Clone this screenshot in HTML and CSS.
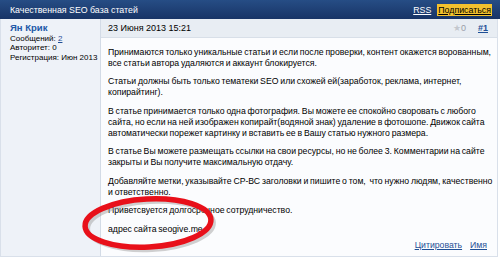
FILE: index.html
```html
<!DOCTYPE html>
<html lang="ru">
  <head>
    <meta charset="utf-8">
    <meta name="viewport" content="width=device-width, initial-scale=1">
    <title>Качественная SEO база статей</title>
    <link rel="stylesheet" href="styles.css">
  </head>
  <body>
  <div id="thread">
    <div class="head">
      <span class="title">Качественная SEO база статей</span>
      <span class="head-links"><a href="#" class="rss">RSS</a><a href="#" class="subscribe">Подписаться</a></span>
    </div>
    <div class="post">
      <div class="author">
        <a href="#" class="name">Ян Крик</a>
        <div>Сообщений: <a href="#">2</a></div>
        <div>Авторитет: 0</div>
        <div>Регистрация: Июн 2013</div>
      </div>
      <div class="main">
        <div class="date-bar">
          <span>23 Июня 2013 15:21</span>
          <span class="meta"><span class="star">★</span><span class="rating">0</span><a href="#" class="num">#1</a></span>
        </div>
        <div class="text">
          <p>Принимаются только уникальные статьи и если после проверки, контент окажется ворованным, все статьи автора удаляются и аккаунт блокируется.</p>
          <p>Статьи должны быть только тематеки SEO или схожей ей(заработок, реклама, интернет, копирайтинг).</p>
          <p>В статье принимается только одна фотография. Вы можете ее спокойно своровать с любого сайта, но если на ней изображен копирайт(водяной знак) удаление в фотошопе. Движок сайта автоматически порежет картинку и вставить ее в Вашу статью нужного размера.</p>
          <p>В статье Вы можете размещать ссылки на свои ресурсы, но не более 3. Комментарии на сайте закрыты и Вы получите максимальную отдачу.</p>
          <p>Добавляйте метки, указывайте СР-ВС заголовки и пишите о том, &nbsp;что нужно людям, качественно и ответственно.</p>
          <p>Приветсвуется долгосрочное сотрудничество.</p>
          <p>адрес сайта seogive.me</p>
        </div>
        <div class="foot"><a href="#">Цитировать</a><a href="#">Имя</a></div>
      </div>
    </div>
    <!-- red marker drawn over the post -->
    <svg class="marker" width="146" height="68" viewBox="0 0 146 68">
      <ellipse cx="74" cy="36" rx="63" ry="24" transform="rotate(-3 74 36)" fill="none" stroke="#9a9a9a" stroke-width="4" opacity="0.45"/>
      <ellipse cx="71" cy="33" rx="63" ry="24" transform="rotate(-3 71 33)" fill="none" stroke="#e8101a" stroke-width="5.5"/>
    </svg>
  </div>
  </body>
</html>
```

FILE: styles.css
```css
html, body {
  margin: 0;
  padding: 0;
  background: #fff;
  font-family: "Liberation Sans", Arial, sans-serif;
  font-size: 8.7px;
  color: #000;
}

#thread {
  position: relative;
  width: 498px;
}

a {
  color: #1f4f96;
}

.head {
  height: 19px;
  width: 500px;
  display: flex;
  align-items: center;
  justify-content: space-between;
  padding: 0 8px 0 10px;
  box-sizing: border-box;
  background: linear-gradient(#264d85, #183466);
  color: #fff;
  font-size: 8.8px;
}

.head-links {
  display: flex;
  align-items: center;
  gap: 6px;
}

.head-links .rss {
  color: #fff;
}

.head-links .subscribe {
  color: #000;
  background: #f2c12e;
  padding: 1px 1px;
}

.post {
  display: flex;
  border: 1px solid #d9e0ea;
  border-top: none;
  height: 237px;
}

.author {
  width: 90px;
  padding: 4px 0 0 9px;
  background: #eef2f8;
  border-right: 1px solid #d3dbe6;
  line-height: 9.5px;
  font-size: 8px;
  white-space: nowrap;
}

.author .name {
  display: block;
  font-weight: bold;
  font-size: 9.5px;
  color: #2158a8;
  text-decoration: none;
  margin-bottom: 1px;
}

.main {
  flex: 1;
  display: flex;
  flex-direction: column;
  background: #fbfcfe;
}

.date-bar {
  height: 18px;
  display: flex;
  align-items: center;
  justify-content: space-between;
  padding: 0 9px 0 7px;
  background: #e8edf3;
  border-bottom: 1px solid #d8dfe8;
  font-size: 9px;
}

.meta {
  display: flex;
  align-items: center;
}

.star {
  color: #c3c7cd;
  font-size: 9px;
}

.rating {
  color: #9aa0a8;
  margin-right: 12px;
}

.num {
  font-weight: bold;
}

.text {
  flex: 1;
  padding: 1px 2px 0 7px;
  line-height: 11px;
  word-spacing: -0.6px;
}

.text p {
  margin: 7.5px 0 0 0;
}

.foot {
  display: flex;
  justify-content: flex-end;
  gap: 8px;
  padding: 0 10px 6px 0;
}

.marker {
  position: absolute;
  left: 77px;
  top: 190px;
}
```
